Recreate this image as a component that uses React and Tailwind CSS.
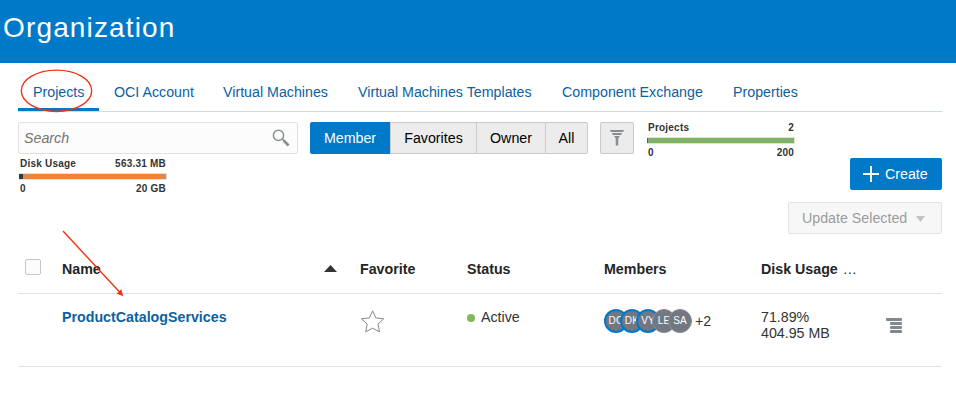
import React from "react";

const TABS = [
  { label: "Projects", width: "w-[51px]", active: true },
  { label: "OCI Account", width: "w-[79px]" },
  { label: "Virtual Machines", width: "w-[105px]" },
  { label: "Virtual Machines Templates", width: "w-[174px]" },
  { label: "Component Exchange", width: "w-[141px]" },
  { label: "Properties", width: "w-[65px]" },
];

const FILTERS = [
  { label: "Favorites", width: "w-[86px]" },
  { label: "Owner", width: "w-[69px]" },
  { label: "All", width: "w-[43px] rounded-r-[2px] border-r" },
];

const MEMBERS = [
  { initials: "DC", owner: true },
  { initials: "DK", owner: true },
  { initials: "VY", owner: true },
  { initials: "LE" },
  { initials: "SA" },
];

function Gauge({ label, value, max, bar, used }) {
  return (
    <div className="w-[150px] text-[10px] font-bold leading-3 tracking-[0.22px] text-[#333]">
      <div className="flex justify-between px-[2px]">
        <span>{label}</span>
        <span>{value}</span>
      </div>
      <div className="mx-px mt-[3px] flex h-[7px] border-y border-r border-[#dbe3e6]">
        <div className={used} />
        <div className={`flex-1 ${bar}`} />
      </div>
      <div className="mt-[3px] flex justify-between px-[2px]">
        <span>0</span>
        <span>{max}</span>
      </div>
    </div>
  );
}

function Annotations() {
  return (
    <svg
      className="pointer-events-none absolute left-0 top-0"
      width="956"
      height="405"
      fill="none"
      stroke="#f5310f"
      strokeWidth="1.4"
    >
      <ellipse cx="56.5" cy="90.8" rx="35.2" ry="20.7" />
      <path d="M63 231 120 292.5" />
      <path d="M123.2 296.2 116.4 293.4 119.2 291.8 121.2 289Z" fill="#f5310f" stroke="none" />
    </svg>
  );
}

export default function App() {
  return (
    <div className="relative h-[405px] w-[956px] overflow-hidden bg-white font-['Liberation_Sans',Arial,sans-serif] text-[14.24px] text-[#333]">
      <header className="flex h-[63px] items-start bg-[#007ac8] pl-[3px] pt-3">
        <h1 className="text-[28px] leading-8 tracking-[1.15px] text-white">Organization</h1>
      </header>

      <nav className="ml-[18px] mr-[14px] flex h-[49px] border-b border-[#d0dbe3]">
        {TABS.map((tab) => (
          <a
            key={tab.label}
            className={`flex h-[48px] items-end px-[15px] leading-4 text-[#0b61a2] ${
              tab.active ? "border-b-[3px] border-[#007ac8] pb-[8px]" : "pb-[11px]"
            }`}
          >
            <span className={`whitespace-nowrap ${tab.width}`}>{tab.label}</span>
          </a>
        ))}
      </nav>

      <div className="mt-[10px] flex h-8 pl-[18px] leading-4">
        <div className="flex w-[280px] items-center justify-between rounded-[2px] border border-[#dfe1e2] bg-[#fcfcfc] pl-[5px] pr-[7px]">
          <span className="italic text-[#737373]">Search</span>
          <svg width="18" height="18" viewBox="0 0 18 18" fill="none" stroke="#8a8f94">
            <circle cx="6.5" cy="6.4" r="5.1" strokeWidth="1.5" />
            <path d="M10 9.8 12 11.8" strokeWidth="1.4" />
            <path d="M11.6 11.4 16.6 16.4" strokeWidth="2.8" />
          </svg>
        </div>
        <div className="ml-3 flex text-black">
          <div className="flex w-20 items-center justify-center rounded-l-[2px] bg-[#007ac8] text-white">Member</div>
          {FILTERS.map((f) => (
            <div
              key={f.label}
              className={`flex items-center justify-center border-y border-l border-[#c8cacb] bg-[#ececec] ${f.width}`}
            >
              {f.label}
            </div>
          ))}
        </div>
        <div className="ml-3 flex w-[34px] items-center justify-center rounded-[2px] border border-[#c8cacb] bg-[#ececec]">
          <svg width="14" height="16" viewBox="0 0 14 16" fill="#888d91">
            <path d="M0 0h14l-.8 2H.8zM2 3h10l-.8 2H2.8zM4 6h6L8.3 8.2V15.5H5.7V8.2z" />
          </svg>
        </div>
        <div className="ml-3">
          <Gauge label="Projects" value="2" max="200" bar="bg-[#81b264]" used="w-px bg-[#55685a]" />
        </div>
      </div>

      <div className="flex items-start justify-between pl-[18px] pr-[14px] leading-4">
        <div className="pt-1">
          <Gauge label="Disk Usage" value="563.31 MB" max="20 GB" bar="bg-[#e98443]" used="w-1 bg-[#3b3532]" />
        </div>
        <div className="flex flex-col items-end gap-3 pt-1">
          <button className="flex h-8 w-[92px] items-center rounded-[2px] bg-[#007ac8] pl-[13px] text-white">
            <svg width="16" height="16" fill="#fff">
              <path d="M7 0h2v16H7zM0 7h16v2H0z" />
            </svg>
            <span className="ml-[6px]">Create</span>
          </button>
          <button className="flex h-8 w-[154px] items-center justify-between whitespace-nowrap rounded-[2px] border border-[#e2e3e4] bg-[#f7f7f7] pl-[13px] pr-4 text-[#9c9c9c]">
            <span>Update Selected</span>
            <svg className="mt-[2px]" width="9" height="6" fill="#c1c3c5">
              <path d="M0 0h9L4.5 6z" />
            </svg>
          </button>
        </div>
      </div>

      <div className="ml-[18px] mr-[14px] mt-[10px] leading-4">
        <div className="grid h-[50px] grid-cols-[44px_298px_107px_137px_157px_1fr] items-center border-b border-[#dfe3e5] font-bold text-[#252525]">
          <div className="mb-[3px] ml-[7px] h-4 w-4 rounded-[2px] border border-[#c4c6c8] bg-[#fcfcfc]" />
          <div className="flex items-center justify-between pr-[23px]">
            <span>Name</span>
            <svg className="mb-px" width="13" height="7" fill="#333">
              <path d="M0 7h13L6.5 0z" />
            </svg>
          </div>
          <div>Favorite</div>
          <div>Status</div>
          <div>Members</div>
          <div>
            Disk Usage <span className="ml-px font-normal">…</span>
          </div>
        </div>
        <div className="grid h-[73px] grid-cols-[44px_298px_107px_137px_157px_125px_1fr] items-start border-b border-[#dfe3e5] pt-[15px]">
          <div />
          <div className="font-bold text-[#0b61a2]">ProductCatalogServices</div>
          <svg width="25" height="25" fill="none" stroke="#888" strokeWidth="1">
            <path d="M12.6 1.8 15.8 8.9 23.7 9.8 18 15 19.5 22.8 12.6 19.2 5.7 22.8 7.2 15 1.4 9.8 9.4 8.9Z" />
          </svg>
          <div className="flex items-center">
            <span className="mr-[6px] mt-[2px] h-2 w-2 rounded-full bg-[#7fb95c]" />
            Active
          </div>
          <div className="flex items-center">
            {MEMBERS.map((m) => (
              <div
                key={m.initials}
                className={`-mr-2 flex h-6 w-6 items-center justify-center overflow-hidden whitespace-nowrap rounded-full bg-[#737782] text-[10px] tracking-[0.2px] text-white ${
                  m.owner ? "border-2 border-[#007ac8]" : "border border-[#8b8e92]"
                }`}
              >
                {m.initials}
              </div>
            ))}
            <span className="ml-[11px]">+2</span>
          </div>
          <div>
            71.89%
            <br />
            404.95 MB
          </div>
          <svg className="mt-[9px]" width="16" height="16" fill="#83888d">
            <rect width="16" height="3" rx="1" />
            <rect x="4" y="4" width="12" height="3" rx="1" />
            <rect x="4" y="8" width="12" height="3" rx="1" />
            <rect x="4" y="12" width="12" height="3" rx="1" />
          </svg>
        </div>
      </div>
      <Annotations />
    </div>
  );
}
